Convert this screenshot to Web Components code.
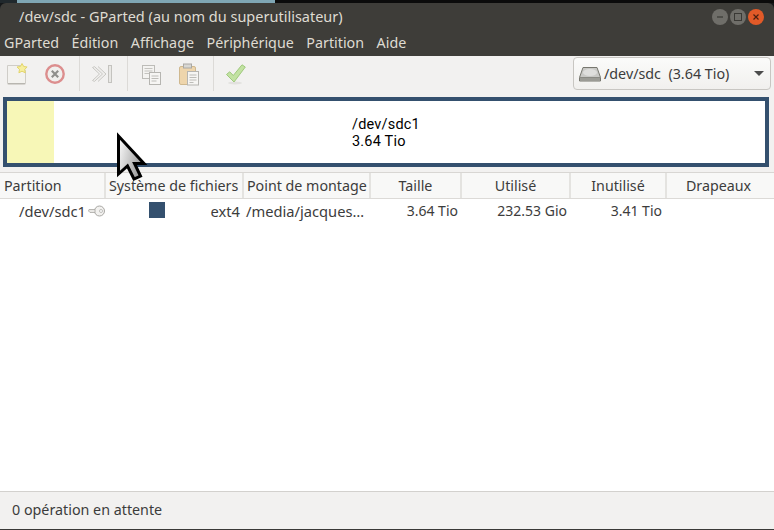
<!DOCTYPE html>
<html lang="fr">
<head>
<meta charset="utf-8">
<title>GParted</title>
<style>
  html, body { margin: 0; padding: 0; background: #f2f1f0; }
  body { width: 774px; height: 530px; overflow: hidden; position: relative; font: 14px "Noto Sans", sans-serif; color: #3c3c3c; }
</style>
</head>
<body>
<gp-window>
  <gp-titlebar title-text="/dev/sdc - GParted (au nom du superutilisateur)"></gp-titlebar>
  <gp-menubar></gp-menubar>
  <gp-toolbar></gp-toolbar>
  <gp-diskmap></gp-diskmap>
  <gp-table></gp-table>
  <gp-status>0 opération en attente</gp-status>
</gp-window>
<gp-cursor></gp-cursor>

<script>
class GpWindow extends HTMLElement {
  constructor() {
    super();
    this.attachShadow({ mode: 'open' });
    this.shadowRoot.innerHTML = `
      <style>
        :host { display: flex; flex-direction: column; width: 774px; height: 530px; background: #fff; }
        .desk { flex: none; height: 3px; background: linear-gradient(90deg, #20282c 0 17px, #7fa6b4 17px 275px, #0b0b0b 275px); }
        .frame { flex: 1; min-height: 0; display: flex; flex-direction: column; background: #15181a; }
      </style>
      <div class="desk"></div>
      <div class="frame"><slot></slot></div>`;
  }
}

class GpTitlebar extends HTMLElement {
  constructor() {
    super();
    this.attachShadow({ mode: 'open' });
    const title = this.getAttribute('title-text') || '';
    this.shadowRoot.innerHTML = `
      <style>
        :host { display: flex; flex: none; height: 25px; align-items: center; justify-content: space-between;
                background: #3e3d39; border-radius: 6px 6px 0 0; color: #dfdbd2; }
        .t { margin-left: 19px; font: 14.5px "Noto Sans", sans-serif; white-space: nowrap; }
        .btns { display: flex; margin-right: 10px; margin-top: 3px; }
        .b { width: 16px; height: 16px; border-radius: 50%; margin-left: 2px; display: flex; align-items: center; justify-content: center;
             background: #6f6e69; }
        .x { background: #e25a28; }
        svg { display: block; }
      </style>
      <span class="t">${title}</span>
      <div class="btns">
        <div class="b"><svg width="10" height="10"><path d="M2 5h6" stroke="#3a3935" stroke-width="1.2"/></svg></div>
        <div class="b"><svg width="10" height="10"><rect x="1.5" y="1.5" width="7" height="7" fill="none" stroke="#3a3935"/></svg></div>
        <div class="b x"><svg width="10" height="10"><path d="M2.5 2.5l5 5M7.5 2.5l-5 5" stroke="#4a2010" stroke-width="1.2"/></svg></div>
      </div>`;
  }
}

class GpMenubar extends HTMLElement {
  constructor() {
    super();
    this.attachShadow({ mode: 'open' });
    const items = ['GParted', 'Édition', 'Affichage', 'Périphérique', 'Partition', 'Aide'];
    this.shadowRoot.innerHTML = `
      <style>
        :host { display: flex; flex: none; height: 28px; gap: 12.5px; padding: 0 0 0 4px; align-items: center;
                background: #3e3d39; color: #dfdbd2; font: 14.3px "Noto Sans", sans-serif; }
        span { white-space: nowrap; }
      </style>
      ${items.map(i => `<span>${i}</span>`).join('')}`;
  }
}

class GpToolbar extends HTMLElement {
  constructor() {
    super();
    this.attachShadow({ mode: 'open' });
    const icons = {
      fresh: `<svg width="24" height="24" viewBox="0 0 24 24"><path d="M2.5 3.5h13l5 5v13a.8.8 0 0 1-.8.8H3.3a.8.8 0 0 1-.8-.8z" fill="#f3f2ef" stroke="#cfcdc8"/><path d="M3 21.5h17" stroke="#b8b6b0"/><path d="M17 1.5l1.7 3 3.4.5-2.4 2.4.6 3.4-3.3-1.6-3.1 1.6.6-3.4L12 5l3.4-.5z" fill="#f7ef9e" stroke="#e3d56a"/></svg>`,
      del: `<svg width="22" height="22" viewBox="0 0 22 22"><circle cx="11" cy="11" r="8.7" fill="#f0efed" stroke="#dc8e8e" stroke-width="2.4"/><path d="M7.8 7.8l6.4 6.4M14.2 7.8l-6.4 6.4" stroke="#8f8f8c" stroke-width="2.2"/></svg>`,
      undo: `<svg width="24" height="24" viewBox="0 0 24 24"><path d="M2.5 5.5l7 6.5-7 6.5 2 .9L12.5 12 4.5 4.6zM8 4.5l8 7.5-8 7.5" fill="#efeeec" stroke="#c9c8c4" stroke-linejoin="round"/><rect x="18.5" y="3.5" width="3" height="17" fill="#e9e8e5" stroke="#c4c3bf"/></svg>`,
      copy: `<svg width="24" height="24" viewBox="0 0 24 24"><rect x="3.5" y="3.5" width="12" height="13" fill="#f4f3f1" stroke="#bdbcb8"/><path d="M5.5 6.5h8M5.5 9h8M5.5 11.500h6" stroke="#c4c3bf"/><rect x="10.500" y="10.500" width="11" height="12" fill="#f6f5f3" stroke="#b6b5b1"/><path d="M12.500 14h7M12.500 16.500h7M12.500 19h5" stroke="#bdbcb8"/></svg>`,
      paste: `<svg width="24" height="24" viewBox="0 0 24 24"><rect x="2.500" y="4.500" width="16" height="18" rx="1.500" fill="#eed5ac" stroke="#cfb88f"/><rect x="6.500" y="2" width="8" height="4" fill="#d8d7d3" stroke="#a9a8a4"/><rect x="10.500" y="9.500" width="11" height="13.500" fill="#f6f5f3" stroke="#b6b5b1"/><path d="M12.500 13h7M12.500 15.500h7M12.500 18h7M12.500 20.500h4" stroke="#bdbcb8"/></svg>`,
      apply: `<svg width="24" height="24" viewBox="0 0 24 24"><ellipse cx="11" cy="21" rx="7" ry="1.500" fill="#e2e1de"/><path d="M2.500 12.500l3.200-2.700 3.600 3.700L18 2.800l3.300 2.200L10 20z" fill="#c2e2a2" stroke="#9fc97c" stroke-linejoin="round"/></svg>`
    };
    const btn = k => `<div class="btn">${icons[k]}</div>`;
    this.shadowRoot.innerHTML = `
      <style>
        :host { display: flex; flex: none; height: 36px; align-items: center; background: #f2f1f0;
                box-sizing: border-box; padding: 0 3px 1px 0; font: 14.3px "Noto Sans", sans-serif; color: #3c3c3c; }
        .btn { width: 38px; height: 34px; display: flex; align-items: center; justify-content: center; }
        .btn svg { display: block; }
        .sep { width: 1px; height: 35px; background: #dcdad7; }
        .grp { display: flex; align-items: center; }
        .grow { flex: 1; }
        .combo { width: 198px; height: 33px; box-sizing: border-box; display: flex; align-items: center;
                 border: 1px solid #c8c6c2; border-radius: 4px; background: linear-gradient(#fbfbfa, #f1f0ee); padding: 0 6px 0 4px; }
        .combo svg.hd { flex: none; margin-right: 2px; }
        .lbl { flex: 1; white-space: pre; }
        .arrow { width: 0; height: 0; border: 5px solid transparent; border-top: 5px solid #4c4c4c; border-bottom: 0; }
      </style>
      <div class="grp" style="margin-left:-2px">${btn('fresh')}${btn('del')}</div>
      <div class="sep" style="margin-left:5px"></div>
      <div class="grp" style="margin-left:3px">${btn('undo')}</div>
      <div class="sep" style="margin-left:6px"></div>
      <div class="grp" style="margin-left:4px">${btn('copy')}${btn('paste')}</div>
      <div class="sep" style="margin-left:5px"></div>
      <div class="grp" style="margin-left:3px">${btn('apply')}</div>
      <div class="grow"></div>
      <div class="combo">
        <svg class="hd" width="24" height="20" viewBox="0 0 24 20"><path d="M5 3.500h14l3.500 10v3.500H1.500v-3.500z" fill="#c9c9c6" stroke="#77776f"/><ellipse cx="12" cy="8.500" rx="7" ry="3.500" fill="#dededc"/><path d="M1.500 13.500h21" stroke="#8a8a84"/><rect x="2" y="14" width="20" height="3" fill="#9b9b95"/></svg>
        <span class="lbl">/dev/sdc  (3.64 Tio)</span>
        <span class="arrow"></span>
      </div>`;
  }
}

class GpDiskmap extends HTMLElement {
  constructor() {
    super();
    this.attachShadow({ mode: 'open' });
    this.shadowRoot.innerHTML = `
      <style>
        :host { display: block; flex: none; background: #f2f1f0; padding: 5px 5px 5px 3px; font: 14.5px Roboto, sans-serif; letter-spacing: .2px; color: #000; }
        .map { height: 62px; border: 4px solid #34506e; background: #fff; display: flex; }
        .used { width: 47px; background: #f7f7b7; flex: none; }
        .txt { margin: 2px 0 0 298px; align-self: center; line-height: 17px; white-space: nowrap; }
      </style>
      <div class="map">
        <div class="used"></div>
        <div class="txt">/dev/sdc1<br>3.64 Tio</div>
      </div>`;
  }
}

class GpTable extends HTMLElement {
  constructor() {
    super();
    this.attachShadow({ mode: 'open' });
    const cols = '106px 138px 127px 91px 109px 96px 1fr';
    this.shadowRoot.innerHTML = `
      <style>
        :host { display: flex; flex-direction: column; flex: 1; min-height: 0; background: #fff; font: 14.7px "Noto Sans", sans-serif; color: #3c3c3c; }
        .head, .row { display: grid; grid-template-columns: ${cols}; }
        .head { height: 27px; box-sizing: border-box; background: #f8f8f7; border-top: 1px solid #d8d6d3; border-bottom: 1px solid #dcdad7; }
        .head div { display: flex; align-items: center; justify-content: center; border-right: 2px solid #e4e3e0; box-sizing: border-box; white-space: nowrap; overflow: hidden; font-size: 14.25px; }
        .head div:last-child { border-right: 0; padding-right: 4px; }
        .head .l { justify-content: flex-start; padding-left: 3px; }
        .head .l:first-child { padding-left: 4px; }
        .row { height: 23px; align-items: center; }
        .row > div { white-space: nowrap; }
        .r { text-align: right; padding-right: 4px; font-size: 14px; }
        .part { display: flex; align-items: center; padding-left: 19px; }
        .part svg { flex: none; margin-left: 2px; }
        .fs { display: flex; align-items: center; justify-content: space-between; padding: 0 4px 0 43px; }
        .sw { width: 16px; height: 16px; background: #34506e; margin-top: -1px; }
        .mnt { padding-left: 2px; }
      </style>
      <div class="head">
        <div class="l">Partition</div>
        <div class="l">Système de fichiers</div>
        <div class="l">Point de montage</div>
        <div>Taille</div><div>Utilisé</div><div>Inutilisé</div><div>Drapeaux</div>
      </div>
      <div class="row">
        <div class="part">/dev/sdc1<svg width="17" height="12" viewBox="0 0 17 12"><circle cx="11.500" cy="6" r="5" fill="#f2f1ef" stroke="#a8a7a3"/><circle cx="13" cy="6" r="1.500" fill="#fff" stroke="#a8a7a3" stroke-width=".7"/><path d="M7 4.500H1l-.5 1.500L2 7.500h5z" fill="#e8e7e4" stroke="#a8a7a3" stroke-width=".8"/></svg></div>
        <div class="fs"><span class="sw"></span><span>ext4</span></div>
        <div class="mnt">/media/jacques…</div>
        <div class="r">3.64 Tio</div>
        <div class="r">232.53 Gio</div>
        <div class="r" style="padding-right:5px">3.41 Tio</div>
        <div></div>
      </div>`;
  }
}

class GpStatus extends HTMLElement {
  constructor() {
    super();
    this.attachShadow({ mode: 'open' });
    this.shadowRoot.innerHTML = `
      <style>
        :host { display: flex; flex: none; height: 39px; box-sizing: border-box; align-items: center; padding: 0 12px 2px; background: #f2f1f0;
                border-top: 1px solid #d3d1ce; border-bottom: 1px solid #3a3a38; font: 14.3px "Noto Sans", sans-serif; color: #3c3c3c; }
      </style>
      <slot></slot>`;
  }
}

// mouse pointer sits over the disk map
class GpCursor extends HTMLElement {
  constructor() {
    super();
    this.attachShadow({ mode: 'open' });
    this.shadowRoot.innerHTML = `
      <style>
        :host { position: absolute; left: 115px; top: 130px; width: 38px; height: 54px; display: block; }
        svg { display: block; }
      </style>
      <svg width="38" height="54" viewBox="0 0 38 54">
        <defs><linearGradient id="g" x1="0" x2="1" y1="0" y2=".4"><stop offset="0" stop-color="#fff"/><stop offset="1" stop-color="#9c9c9c"/></linearGradient></defs>
        <path d="M3.500 6V44L12.500 36 19 49 25.500 46 19.500 33.500H29Z" fill="url(#g)" stroke="#000" stroke-width="3" stroke-linejoin="miter"/>
      </svg>`;
  }
}

customElements.define('gp-window', GpWindow);
customElements.define('gp-titlebar', GpTitlebar);
customElements.define('gp-menubar', GpMenubar);
customElements.define('gp-toolbar', GpToolbar);
customElements.define('gp-diskmap', GpDiskmap);
customElements.define('gp-table', GpTable);
customElements.define('gp-status', GpStatus);
customElements.define('gp-cursor', GpCursor);
</script>
</body>
</html>
